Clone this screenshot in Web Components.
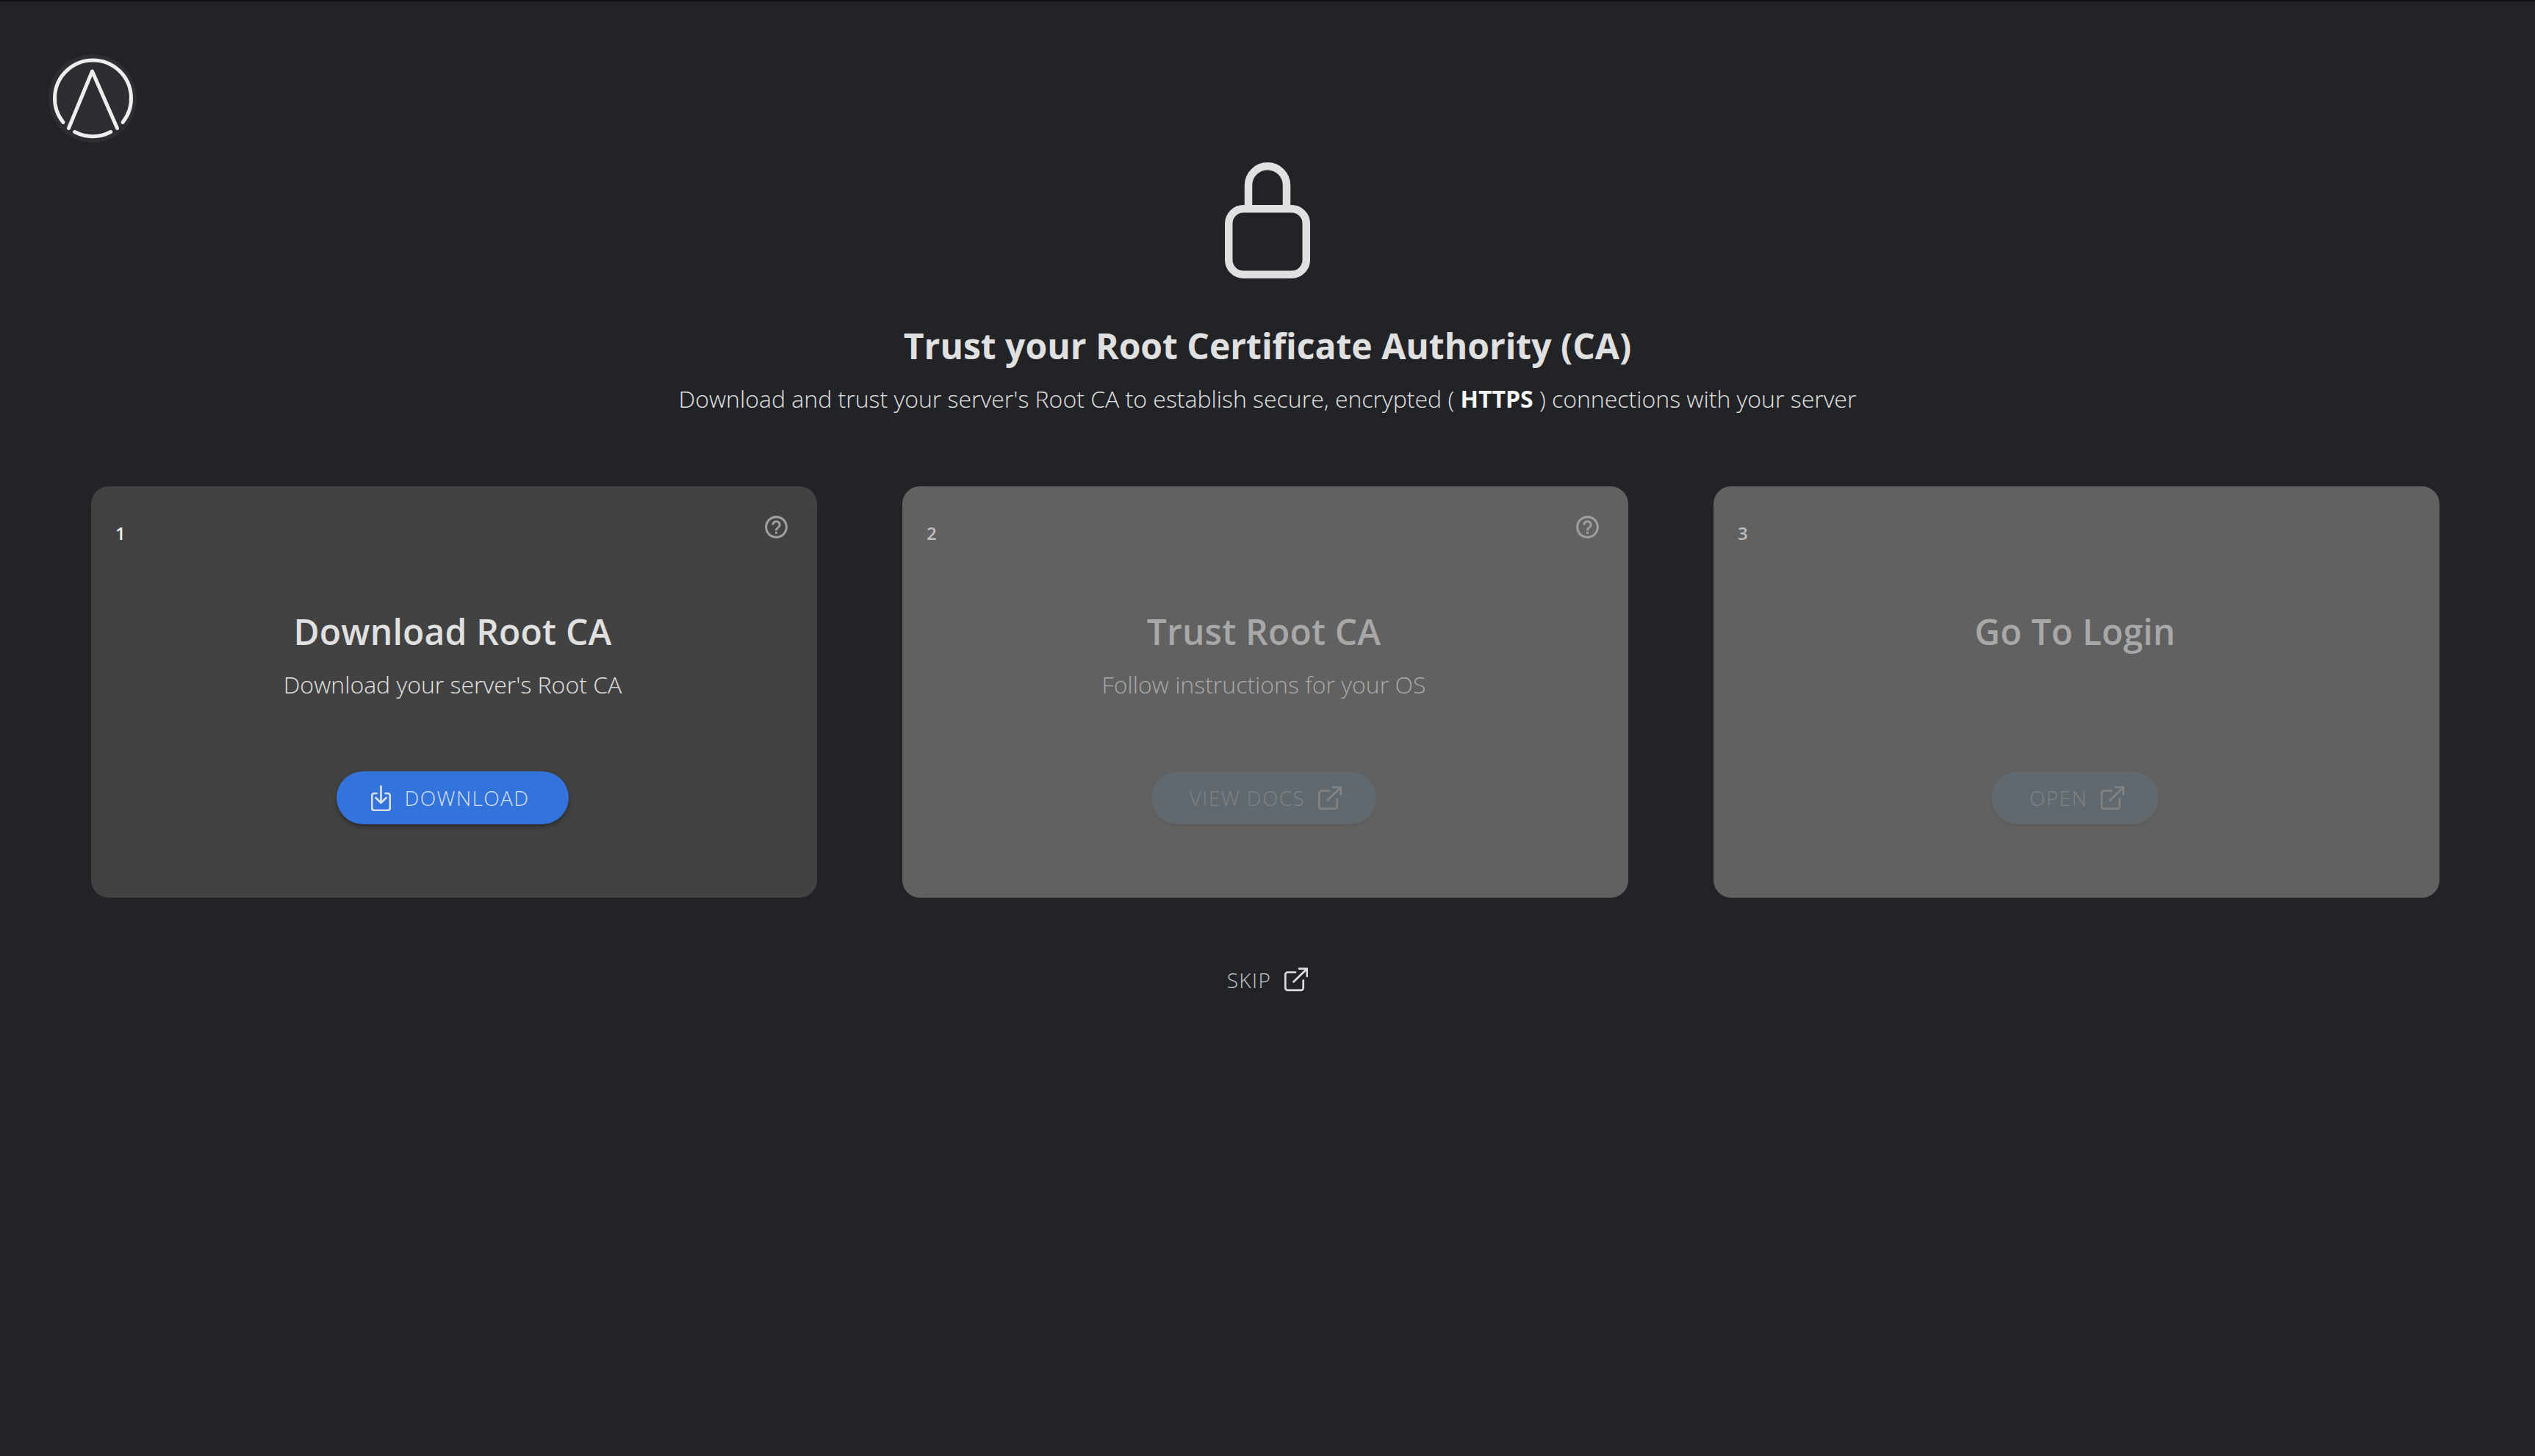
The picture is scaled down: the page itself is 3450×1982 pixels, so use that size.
<!DOCTYPE html>
<html lang="en"><head><meta charset="utf-8"><title>Trust your Root CA</title>
<style>
html,body{margin:0;padding:0;background:#222327;}
body{font-family:"Open Sans",sans-serif;color:#e0e0e0;}
</style></head><body>
<ca-page>
  <ca-step slot="steps" number="1" help title-text="Download Root CA" desc="Download your server's Root CA">
    <ca-button icon="download" lead>DOWNLOAD</ca-button>
  </ca-step>
  <ca-step slot="steps" number="2" help disabled title-text="Trust Root CA" desc="Follow instructions for your OS">
    <ca-button icon="external" disabled>VIEW DOCS</ca-button>
  </ca-step>
  <ca-step slot="steps" number="3" disabled title-text="Go To Login" desc="">
    <ca-button icon="external" disabled>OPEN</ca-button>
  </ca-step>
</ca-page>
<script>
const ICONS={
 external:`<svg width="32" height="33" viewBox="0 0 32 33" fill="none" stroke="currentColor" stroke-width="2.7" stroke-linecap="round" stroke-linejoin="round"><path d="M15 6.5H4.5a3.2 3.2 0 0 0-3.2 3.2v18a3.2 3.2 0 0 0 3.2 3.2h18a3.2 3.2 0 0 0 3.2-3.2V17.5"/><path d="M12.5 19.5 30.5 2M20 1.6h10.8V12"/></svg>`,
 download:`<svg width="27" height="35" viewBox="0 0 27 35" fill="none" stroke="currentColor" stroke-width="2.7" stroke-linecap="round" stroke-linejoin="round"><path d="M7.5 11H4.2A3 3 0 0 0 1.2 14v17a3 3 0 0 0 3 3h18.600a3 3 0 0 0 3-3V14a3 3 0 0 0-3-3h-3.300"/><path d="M13.500 1.300V24M6.500 17l7 7 7-7"/></svg>`
};
class CaLogo extends HTMLElement{constructor(){super();this.attachShadow({mode:'open'}).innerHTML=`<style>:host{display:block;width:120px;height:120px}svg{display:block}</style>
<svg width="120" height="120" viewBox="0 0 120 120" fill="none" stroke="#eee" stroke-width="5" stroke-linecap="round" stroke-linejoin="round">
<circle cx="60" cy="60" r="60" fill="#fff" fill-opacity=".05" stroke="none"/>
<path d="M20 92.500A52 52 0 1 1 101 92.500"/><path d="M35.700 105.500A52 52 0 0 0 84.700 105.500"/><path d="M27.500 100.500 59.500 23 93.500 100.500"/></svg>`}}
customElements.define('ca-logo',CaLogo);
class CaLock extends HTMLElement{constructor(){super();this.attachShadow({mode:'open'}).innerHTML=`<style>:host{display:block;width:116px;height:158px}svg{display:block}</style>
<svg width="116" height="158" viewBox="0 0 116 158" fill="none" stroke="#e0e0e0" stroke-width="10.500"><rect x="5.250" y="63.250" width="105.500" height="89.500" rx="20"/><path d="M32 60V31.250A26 26 0 0 1 84 31.250V60"/></svg>`}}
customElements.define('ca-lock',CaLock);
class CaButton extends HTMLElement{constructor(){super();const ic=ICONS[this.getAttribute('icon')],lead=this.hasAttribute('lead');this.attachShadow({mode:'open'}).innerHTML=`<style>
:host{display:inline-flex;align-items:center;height:72px;border-radius:36px;background:#3273dc;color:#d9e0ea;box-shadow:0 3px 6px rgba(0,0,0,.35);font:300 28px/1 "Open Sans",sans-serif;letter-spacing:1.400px;box-sizing:border-box;gap:18px;padding:0 47px 0 52px}
:host([lead]){padding:0 54px 0 47px;gap:19px}
:host([disabled]){background:#62696e;color:#7f8386;box-shadow:0 2px 5px rgba(0,0,0,.08)}
svg{display:block;flex:none}</style>${lead?ic:''}<span><slot></slot></span>${lead?'':ic}`}}
customElements.define('ca-button',CaButton);
class CaStep extends HTMLElement{constructor(){super();const a=n=>this.getAttribute(n)||'';this.attachShadow({mode:'open'}).innerHTML=`<style>
:host{display:flex;flex-direction:column;align-items:center;box-sizing:border-box;height:560px;border-radius:24px;background:#424242;padding:37px 37px 0 33px;color:#e0e0e0}
:host([disabled]){background:#616161;color:#a8a8a8}
.head{width:100%;height:37px;display:flex;justify-content:space-between;align-items:flex-start}
.num{font:600 24px/1 "Open Sans",sans-serif;margin-top:15px;color:#eee}
:host([disabled]) .num{color:#bdbdbd}
.help{display:block;fill:#9e9e9e}
h2{margin:92px 0 0;font:600 48px/64px "Open Sans",sans-serif;text-align:center;letter-spacing:.2px}
p{margin:18px 0 0;height:44px;font:300 32px/44px "Open Sans",sans-serif;text-align:center}
.act{margin-top:96px}
</style><div class="head"><span class="num">${a('number')}</span>${this.hasAttribute('help')?`<svg class="help" width="37" height="37" viewBox="0 0 24 24"><path d="M11 18h2v-2h-2v2zm1-16C6.480 2 2 6.480 2 12s4.480 10 10 10 10-4.480 10-10S17.520 2 12 2zm0 18c-4.410 0-8-3.590-8-8s3.590-8 8-8 8 3.590 8 8-3.590 8-8 8zm0-14c-2.210 0-4 1.790-4 4h2c0-1.100.9-2 2-2s2 .9 2 2c0 2-3 1.750-3 5h2c0-2.250 3-2.500 3-5 0-2.210-1.790-4-4-4z"/></svg>`:''}</div>
<h2>${a('title-text')}</h2><p>${a('desc')}</p><div class="act"><slot></slot></div>`}}
customElements.define('ca-step',CaStep);
class CaPage extends HTMLElement{constructor(){super();this.attachShadow({mode:'open'}).innerHTML=`<style>
:host{display:block;box-sizing:border-box;min-height:1982px;border-top:2px solid #0e1011;background:#222327}
header{padding:72px 0 0 66px;height:122px}
main{display:flex;flex-direction:column;align-items:center}
ca-lock{margin-top:25px}
h1{margin:60px 0 0;font:700 48px/64px "Open Sans",sans-serif;color:#e0e0e0;text-align:center}
.sub{margin:18px 0 0;font:300 32px/44px "Open Sans",sans-serif;color:#e0e0e0;text-align:center}
.sub b{font-weight:700;color:#f5f5f5}
.steps{margin-top:97px;width:100%;box-sizing:border-box;padding:0 130px 0 124px;display:grid;grid-template-columns:repeat(3,988px);column-gap:116px}
.skip{margin-top:95px;display:flex;align-items:center;gap:18px;font:300 28px/32px "Open Sans",sans-serif;letter-spacing:1.400px;color:#c4c4c4}
.skip svg{display:block;color:#dedede}
</style><header><ca-logo></ca-logo></header><main><ca-lock></ca-lock>
<h1>Trust your Root Certificate Authority (CA)</h1>
<p class="sub">Download and trust your server's Root CA to establish secure, encrypted ( <b>HTTPS</b> ) connections with your server</p>
<div class="steps"><slot name="steps"></slot></div>
<div class="skip"><span>SKIP</span>${ICONS.external}</div></main>`}}
customElements.define('ca-page',CaPage);
</script></body></html>
